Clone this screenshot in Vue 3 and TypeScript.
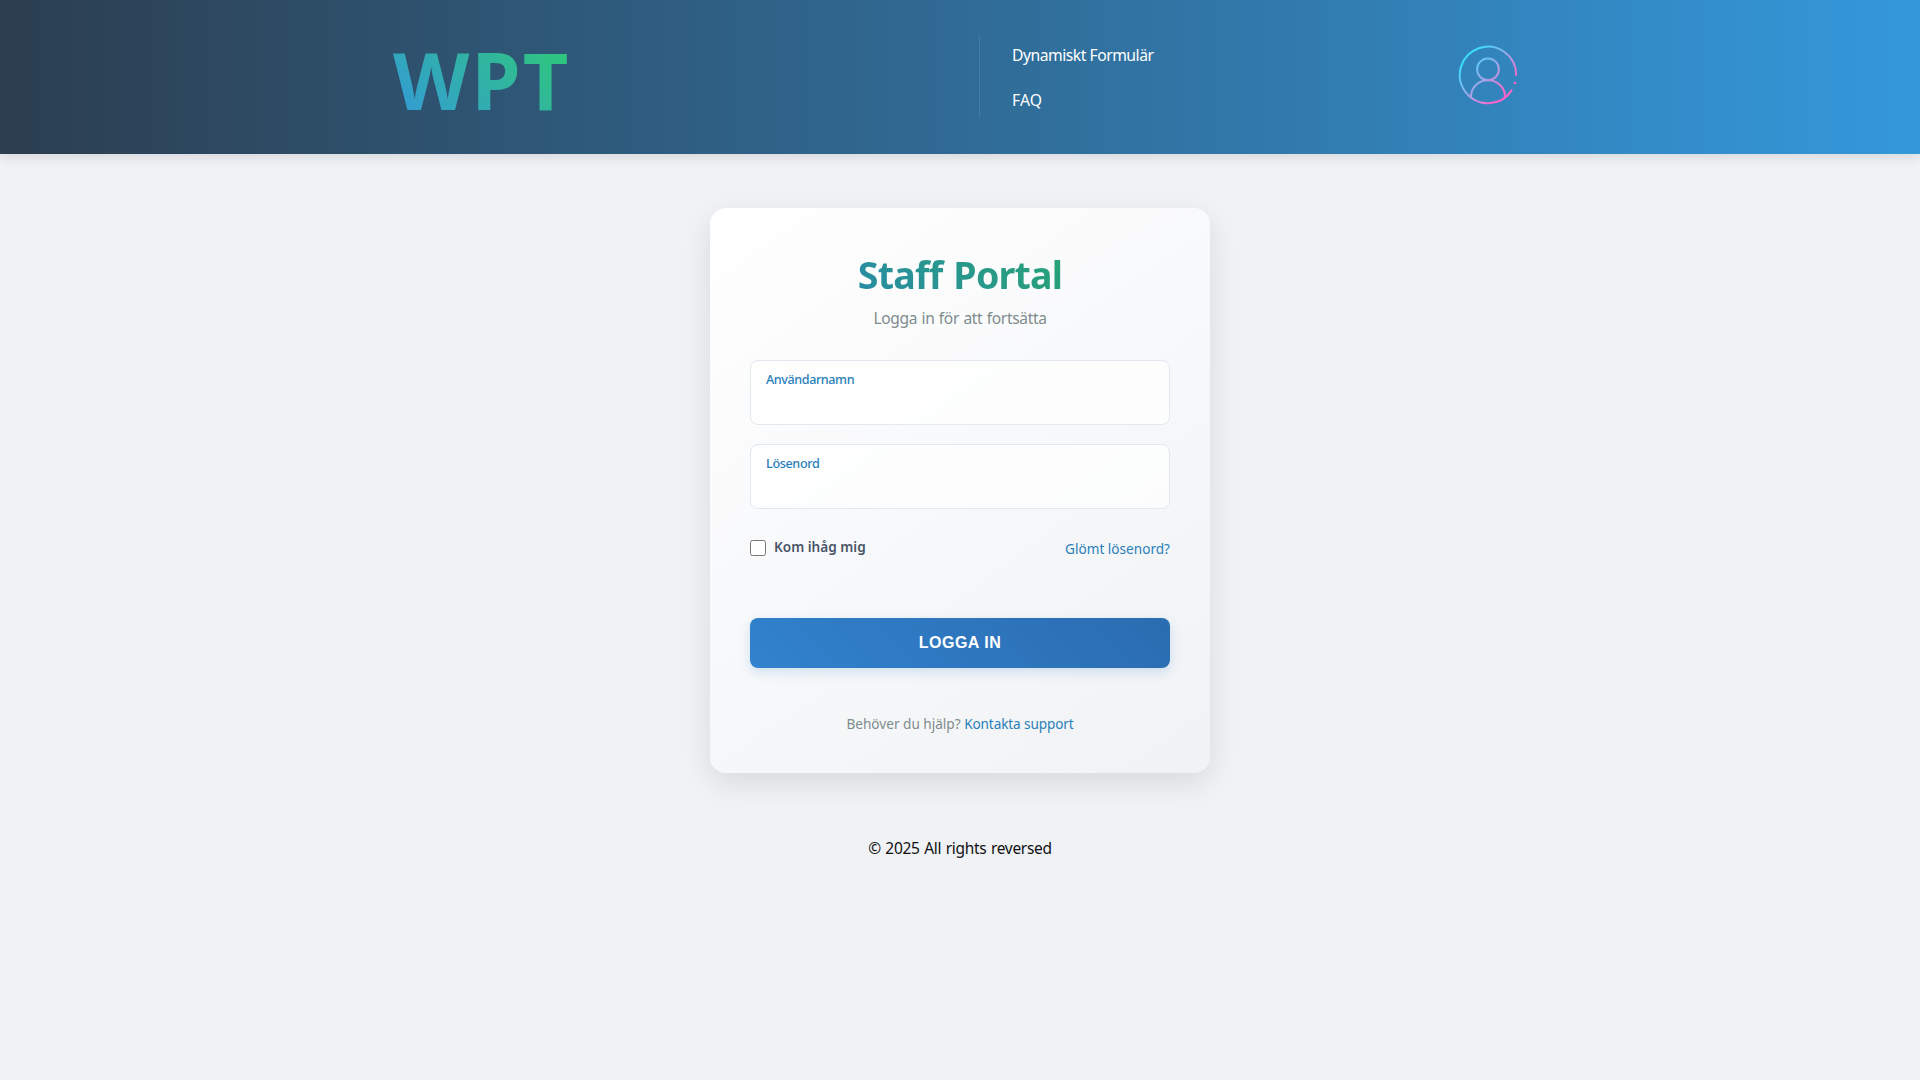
<script setup lang="ts">
import { reactive, ref } from 'vue'

interface Field {
  id: 'username' | 'password'
  label: string
  type: string
}

const menu: string[] = ['Dynamiskt Formulär', 'FAQ']

const fields: Field[] = [
  { id: 'username', label: 'Användarnamn', type: 'text' },
  { id: 'password', label: 'Lösenord', type: 'password' },
]

const form = reactive({ username: '', password: '' })
const remember = ref(false)
</script>

<template>
  <div class="page">
    <header class="header">
      <div class="brand-col">
        <a class="brand">WPT</a>
      </div>
      <nav class="menu">
        <a v-for="item in menu" :key="item" class="menu-link">{{ item }}</a>
      </nav>
      <div class="user-col">
        <svg class="user-icon" viewBox="0 0 60 60" fill="none" stroke="url(#user-stroke)" stroke-width="2" stroke-linecap="round">
          <defs>
            <linearGradient id="user-stroke" gradientUnits="userSpaceOnUse" x1="9" y1="14" x2="46" y2="49">
              <stop offset="0" stop-color="#3ddcff" />
              <stop offset="0.28" stop-color="#6dc0f2" />
              <stop offset="0.6" stop-color="#b39ae2" />
              <stop offset="1" stop-color="#ff62c8" />
            </linearGradient>
          </defs>
          <path d="M58.2 30A28.2 28.2 0 1 0 53.6 45.4" />
          <path d="M57 38v.01" stroke-width="2.6" />
          <circle cx="30" cy="24.3" r="10.9" />
          <path d="M13 51.6v-.2a17 16.2 0 0 1 34 0v.2" />
        </svg>
      </div>
    </header>

    <main class="main">
      <section class="card">
        <h1 class="title">Staff Portal</h1>
        <p class="subtitle">Logga in för att fortsätta</p>
        <form @submit.prevent>
          <div v-for="field in fields" :key="field.id" class="field">
            <label class="field-label" :class="field.id" :for="field.id">{{ field.label }}</label>
            <input :id="field.id" v-model="form[field.id]" class="field-input" :type="field.type" />
          </div>
          <div class="options">
            <label class="remember">
              <input v-model="remember" class="checkbox" type="checkbox" />
              <span>Kom ihåg mig</span>
            </label>
            <a class="link forgot">Glömt lösenord?</a>
          </div>
          <button class="submit" type="submit">LOGGA IN</button>
        </form>
        <p class="help">Behöver du hjälp? <a class="link support">Kontakta support</a></p>
      </section>
    </main>

    <footer class="footer">© 2025 All rights reversed</footer>
  </div>
</template>

<style>
body {
  margin: 0;
  background: #f0f2f6;
}
</style>

<style scoped>
.page {
  min-height: 100vh;
  font-family: 'Noto Sans', sans-serif;
  background: #f0f2f6;
}

.header {
  display: flex;
  box-sizing: border-box;
  height: 154px;
  padding: 36px 0;
  background: linear-gradient(90deg, #2c3e50, #3498db);
  box-shadow: 0 4px 12px rgba(0, 0, 0, 0.1);
}

.brand-col {
  box-sizing: border-box;
  flex: 0 0 979px;
  padding-left: 393px;
}

.brand {
  display: inline-block;
  padding-right: 6px;
  font-size: 79px;
  font-weight: 700;
  line-height: 88px;
  letter-spacing: 2.2px;
  color: transparent;
  background: linear-gradient(45deg, #3498db, #2ecc71);
  -webkit-background-clip: text;
  background-clip: text;
}

.menu {
  display: flex;
  flex-direction: column;
  gap: 21px;
  box-sizing: border-box;
  flex: 0 0 479px;
  padding: 7px 0 0 32px;
  height: 82px;
  border-left: 1px solid rgba(255, 255, 255, 0.1);
}

.menu-link {
  font-size: 15.7px;
  line-height: 24px;
  letter-spacing: -0.48px;
  color: #fff;
}

.menu-link:last-child {
  letter-spacing: 0.1px;
}

.user-col {
  padding-top: 9px;
}

.user-icon {
  display: block;
  width: 60px;
  height: 60px;
}

.main {
  display: flex;
  justify-content: center;
  padding-top: 54px;
}

.card {
  box-sizing: border-box;
  width: 500px;
  height: 565px;
  padding: 40px;
  border-radius: 16px;
  background: linear-gradient(145deg, #ffffff, #f0f2f5);
  box-shadow: 0 10px 30px rgba(0, 0, 0, 0.1);
}

.title {
  margin: 0;
  font-size: 37.6px;
  font-weight: 700;
  line-height: 54px;
  letter-spacing: -0.8px;
  word-spacing: 2px;
  text-align: center;
  color: transparent;
  background: linear-gradient(45deg, #2980b9, #27ae60);
  -webkit-background-clip: text;
  background-clip: text;
}

.subtitle {
  margin: 4px 0 30px;
  font-size: 15.5px;
  line-height: 24px;
  letter-spacing: -0.32px;
  word-spacing: 0.7px;
  text-align: center;
  color: #7f8c8d;
}

.field {
  display: flex;
  flex-direction: column;
  box-sizing: border-box;
  height: 65px;
  margin-bottom: 19px;
  padding: 9px 15px 0;
  border: 1px solid #e2e8f0;
  border-radius: 8px;
  background: rgba(255, 255, 255, 0.7);
}

.field-label {
  font-size: 12.6px;
  font-weight: 500;
  line-height: 20px;
  letter-spacing: -0.42px;
  color: #2980b9;
}

.field-label.password {
  letter-spacing: -0.35px;
}

.field-input {
  width: 100%;
  height: 28px;
  padding: 0;
  border: 0;
  outline: 0;
  font: inherit;
  background: transparent;
}

.options {
  display: flex;
  justify-content: space-between;
  align-items: flex-start;
  box-sizing: border-box;
  height: 90px;
  padding-top: 10px;
  font-size: 13.6px;
  line-height: 20px;
}

.remember {
  display: flex;
  align-items: center;
  gap: 8px;
  font-weight: 600;
  color: #4a5568;
}

.remember span {
  position: relative;
  top: -1px;
}

.checkbox {
  width: 16px;
  height: 16px;
  margin: 0;
}

.link {
  color: #2980b9;
}

.forgot {
  padding-top: 1px;
}

.support {
  letter-spacing: -0.12px;
}

.submit {
  display: block;
  width: 100%;
  height: 50px;
  padding: 0;
  border: 0;
  border-radius: 8px;
  font-family: 'Liberation Sans', sans-serif;
  font-size: 16px;
  font-weight: 700;
  letter-spacing: 0.5px;
  color: #fff;
  background: linear-gradient(45deg, #3182ce, #2b6cb0);
  box-shadow: 0 4px 12px rgba(49, 130, 206, 0.2);
}

.help {
  margin: 46px 0 0;
  font-size: 13.6px;
  line-height: 20px;
  text-align: center;
  color: #7f8c8d;
}

.footer {
  padding-top: 63px;
  font-size: 15.5px;
  line-height: 24px;
  letter-spacing: -0.3px;
  word-spacing: 0.8px;
  text-align: center;
  color: #111;
}
</style>
